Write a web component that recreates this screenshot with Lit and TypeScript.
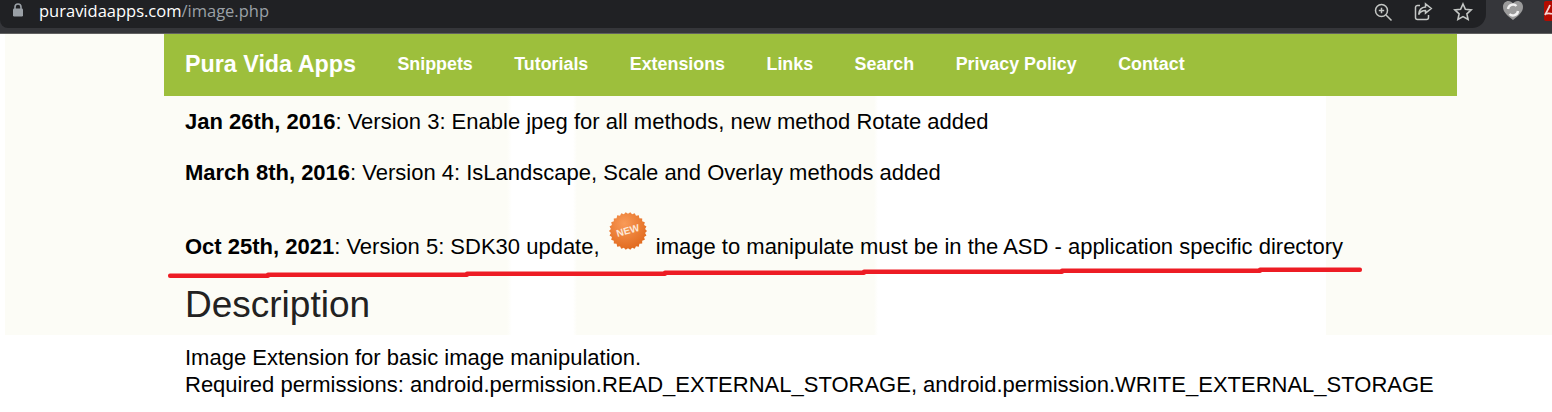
import { LitElement, css, html, svg } from 'lit';
import { customElement } from 'lit/decorators.js';

// stair-stepped hand-drawn underline: x start, x end, y top
const underlineSteps = [
  [170, 268, 273.5],
  [268, 467, 272.5],
  [467, 665, 271.5],
  [665, 864, 270.5],
  [864, 1062, 269.5],
  [1062, 1260, 268.5],
  [1260, 1360, 267.5],
];

const badgePoints = () => {
  const pts: string[] = [];
  const n = 26;
  for (let i = 0; i < n * 2; i++) {
    const r = i % 2 ? 17.2 : 19;
    const a = (i * Math.PI) / n;
    pts.push(`${(20 + r * Math.cos(a)).toFixed(2)},${(20 + r * Math.sin(a)).toFixed(2)}`);
  }
  return pts.join(' ');
};

@customElement('app-root')
export class AppRoot extends LitElement {
  render() {
    return html`
      <header class="chrome">
        <div class="omnibox">
          <svg class="lock" width="12" height="14" viewBox="0 0 12 14">
            <path d="M3 6V4a3 3 0 0 1 6 0v2" fill="none" stroke="#9aa0a6" stroke-width="1.6" />
            <rect x="1" y="5.5" width="10" height="8" rx="1.2" fill="#9aa0a6" />
          </svg>
          <span class="url"><span class="host">puravidaapps.com</span>/image.php</span>
          <div class="actions">
            <svg width="20" height="20" viewBox="0 0 20 20" fill="none" stroke="#c4c7c5" stroke-width="1.5">
              <circle cx="8.5" cy="8.5" r="6" />
              <path d="M13 13l5.5 5.5M8.5 5.8v5.4M5.8 8.5h5.4" />
            </svg>
            <svg width="20" height="20" viewBox="0 0 20 20" fill="none" stroke="#c4c7c5" stroke-width="1.5">
              <path d="M7 3.5H4.5a2 2 0 0 0-2 2v10a2 2 0 0 0 2 2h9a2 2 0 0 0 2-2V13" />
              <path d="M12.5 1.8l5.8 4.7-5.8 4.7V8.6c-3.4 0-5.4 1.2-6.8 4 .3-4.6 2.8-7.2 6.8-7.5z" />
            </svg>
            <svg width="20" height="20" viewBox="0 0 20 20" fill="none" stroke="#c4c7c5" stroke-width="1.6">
              <path d="M10 2l2.4 5.3 5.8.6-4.3 3.9 1.2 5.7L10 14.6l-5.1 2.9 1.2-5.7-4.3-3.9 5.8-.6z" />
            </svg>
          </div>
        </div>
        <svg class="heart" width="22" height="21" viewBox="0 0 22 21">
          <path d="M11 20C5 15.5 1 12 1 6.8 1 3.4 3.5 1 6.4 1 8.3 1 10 2 11 3.5 12 2 13.7 1 15.6 1 18.5 1 21 3.4 21 6.8 21 12 17 15.5 11 20z" fill="#9b9b9b" />
          <path d="M6 9a5 5 0 0 1 8.5-3M16 11a5 5 0 0 1-8.5 3" fill="none" stroke="#f1f1f1" stroke-width="2.4" />
        </svg>
        <svg class="pdf" width="8" height="20" viewBox="0 0 8 20">
          <rect width="12" height="20" rx="2" fill="#b30b00" />
          <path d="M1 14C3 10 5 7 6 4M1 13c3-1 5-1 7 0" fill="none" stroke="#f4d6d3" stroke-width="1.8" />
        </svg>
      </header>

      <div class="page">
        <main class="sheet">
          <nav class="nav">
            <span class="brand">Pura Vida Apps</span>
            <a>Snippets</a>
            <a>Tutorials</a>
            <a>Extensions</a>
            <a>Links</a>
            <a>Search</a>
            <a>Privacy Policy</a>
            <a>Contact</a>
          </nav>
          <div class="content">
            <p class="log"><b>Jan 26th, 2016</b>: Version 3: Enable jpeg for all methods, new method Rotate added</p>
            <p class="log"><b>March 8th, 2016</b>: Version 4: IsLandscape, Scale and Overlay methods added</p>
            <p class="log latest">
              <b>Oct 25th, 2021</b>: Version 5: SDK30 update,
              <svg class="badge" width="40" height="40" viewBox="0 0 40 40">
                <defs>
                  <radialGradient id="orange" cx="0.4" cy="0.3" r="0.8">
                    <stop offset="0" stop-color="#f99a57" />
                    <stop offset="1" stop-color="#de6417" />
                  </radialGradient>
                </defs>
                <polygon points=${badgePoints()} fill="url(#orange)" />
                <text
                  x="20"
                  y="23"
                  text-anchor="middle"
                  transform="rotate(-16 20 20)"
                  font-family="Liberation Sans, sans-serif"
                  font-size="10"
                  font-weight="700"
                  fill="#fde7d6"
                >NEW</text>
              </svg>
              image to manipulate must be in the ASD - application specific directory
            </p>
            <h2>Description</h2>
            <p class="desc">
              Image Extension for basic image manipulation.<br />
              Required permissions: android.permission.READ_EXTERNAL_STORAGE, android.permission.WRITE_EXTERNAL_STORAGE
            </p>
          </div>
        </main>
        <svg class="underline" width="1552" height="300" viewBox="0 0 1552 300">
          ${underlineSteps.map(
            ([x1, x2, y]) => svg`<rect x=${x1 - 2} y=${y} width=${x2 - x1 + 4} height="4.5" rx="2" fill="#ed1c24" />`,
          )}
        </svg>
      </div>
    `;
  }

  static styles = css`
    :host {
      display: block;
      height: 412px;
      overflow: hidden;
      background: #fff;
      font-family: 'Liberation Sans', Arial, sans-serif;
    }

    .chrome {
      display: flex;
      align-items: flex-start;
      height: 33px;
      background: #35363a;
      border-bottom: 1px solid #616161;
    }

    .omnibox {
      flex: none;
      display: flex;
      align-items: flex-start;
      box-sizing: border-box;
      width: 1486px;
      height: 28px;
      padding: 2px 13px 0 12px;
      background: #202124;
      border-radius: 0 0 14px 8px;
    }

    .lock {
      margin-top: 1px;
    }

    .url {
      margin-left: 15px;
      font-family: 'Open Sans', sans-serif;
      font-size: 16.5px;
      line-height: 18px;
      color: #9aa0a6;
    }

    .host {
      color: #fff;
    }

    .actions {
      display: flex;
      gap: 20px;
      margin-left: auto;
    }

    .heart {
      flex: none;
      margin-left: 16px;
    }

    .pdf {
      flex: none;
      margin: 1px 0 0 20px;
    }

    .page {
      position: relative;
      padding-left: 164px;
      background:
        linear-gradient(
            to right,
            #fff 5px,
            #fcfcf6 5px,
            #fcfcf6 507px,
            #fff 512px,
            #fff 573px,
            #fcfcf6 577px,
            #fcfcf6 874px,
            #fff 878px,
            #fff 1326px,
            #fcfcf6 1326px
          )
          0 0 / 100% 301px no-repeat;
    }

    .sheet {
      width: 1293px;
    }

    .nav {
      display: flex;
      align-items: center;
      gap: 41.5px;
      box-sizing: border-box;
      height: 62px;
      padding: 0 0 2px 21px;
      background: #9dbf3c;
      color: #fff;
      font-size: 17.85px;
      font-weight: 700;
    }

    .brand {
      font-size: 23.3px;
    }

    .content {
      padding: 12px 0 0 21px;
      color: #000;
      font-size: 22px;
      line-height: 27px;
    }

    .log {
      margin: 0 0 24px;
    }

    .latest {
      margin: 0;
      padding-top: 1px;
      white-space: nowrap;
    }

    .badge {
      margin: 0 2px;
      vertical-align: 3px;
    }

    h2 {
      margin: 23px 0 17px;
      color: #222;
      font-size: 37px;
      font-weight: 400;
      line-height: 44px;
    }

    .desc {
      margin: 0;
      white-space: nowrap;
    }

    .underline {
      position: absolute;
      top: -34px;
      left: 0;
      pointer-events: none;
    }
  `;
}

declare global {
  interface HTMLElementTagNameMap {
    'app-root': AppRoot;
  }
}
